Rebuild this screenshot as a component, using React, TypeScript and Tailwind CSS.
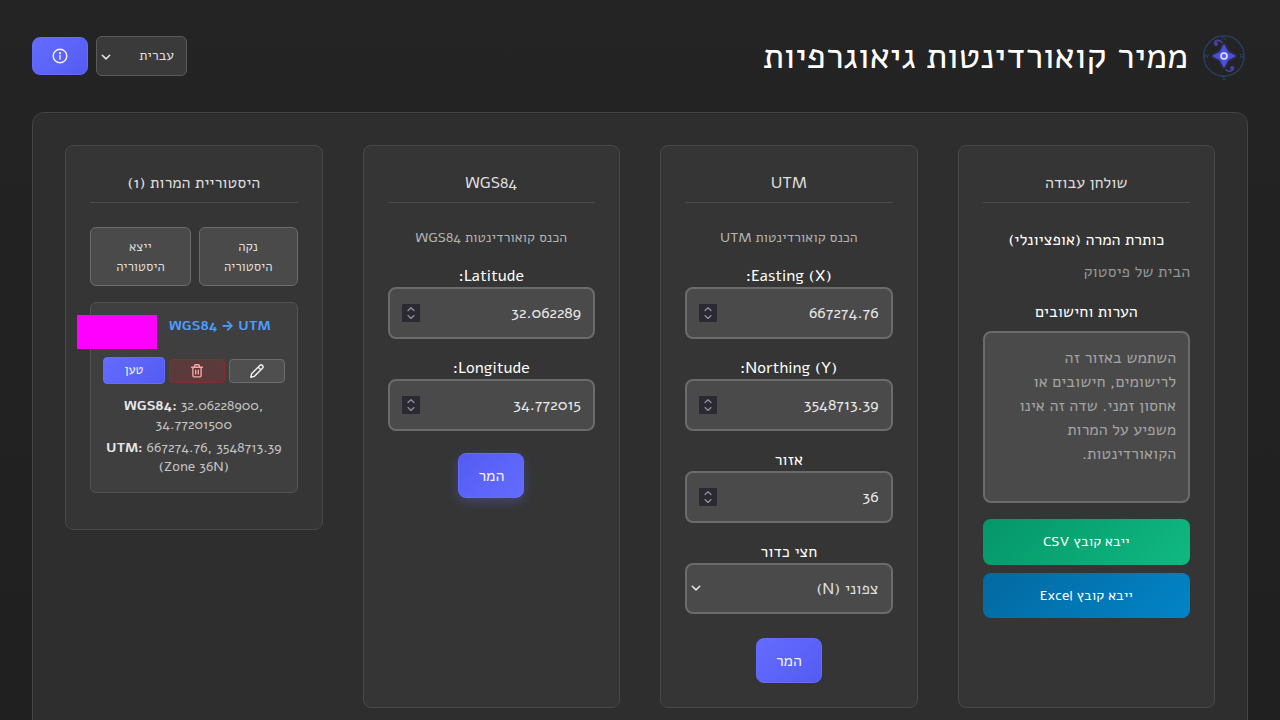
import type { ReactNode } from "react";

function CompassLogo() {
  return (
    <svg viewBox="0 0 48 48" className="size-12 shrink-0" aria-hidden="true">
      <defs>
        <filter id="glow" x="-50%" y="-50%" width="200%" height="200%">
          <feGaussianBlur stdDeviation="1.5" />
        </filter>
      </defs>
      <circle cx="24" cy="24" r="20.2" fill="none" stroke="#263f5f" strokeWidth="1.4" />
      <g fill="#2b4a72" fontSize="6" fontFamily="Liberation Sans, sans-serif" textAnchor="middle">
        <text x="24" y="8">N</text>
        <text x="24" y="48">S</text>
        <text x="42" y="26">E</text>
        <text x="6" y="26">W</text>
      </g>
      <path d="M24 12 L28 20 L36 24 L28 28 L24 36 L20 28 L12 24 L20 20 Z" fill="#4648d8" filter="url(#glow)" />
      <path d="M24 12 L28 20 L36 24 L28 28 L24 36 L20 28 L12 24 L20 20 Z" fill="#4b50dc" />
      <g fill="none" stroke="#4640a8" strokeWidth="1.6" strokeLinecap="round">
        <path d="M22 10.5 C20 7.5 15 7.5 14.5 11.5" />
        <path d="M26 38 C29 40.5 33.5 39 33.5 35.5" />
      </g>
      <circle cx="16" cy="12" r="2" fill="#4640a8" />
      <circle cx="32" cy="36" r="2" fill="#4640a8" />
      <circle cx="24" cy="24" r="3" fill="#5b5fe8" stroke="#dfe2ff" strokeWidth="1.6" />
    </svg>
  );
}

function Chevron({ className }: { className: string }) {
  return (
    <svg viewBox="0 0 10 10" className={className} fill="none" stroke="#e6e6e6" strokeWidth="1.5" strokeLinecap="round" strokeLinejoin="round" aria-hidden="true">
      <path d="M1.3 3.2 L5 6.9 L8.7 3.2" />
    </svg>
  );
}

function Card({ title, children, className = "" }: { title: string; children: ReactNode; className?: string }) {
  return (
    <section className={`flex flex-col rounded-lg border border-[#484848] bg-[#353535] p-6 ${className}`}>
      <h2 className="mb-6 border-b border-[#4a4a4a] pb-1.5 text-center text-base leading-[26px] text-[#dedede]">{title}</h2>
      {children}
    </section>
  );
}

function NumberField({ id, label, value }: { id: string; label: string; value: string }) {
  return (
    <div className="mb-4 flex flex-col">
      <label htmlFor={id} className="h-6 text-center leading-[26px]">{label}</label>
      <div className="flex h-[52px] items-center rounded-lg border-2 border-[#6b6b6b] bg-[#4a4a4a] px-3">
        <input id={id} type="text" inputMode="decimal" dir="ltr" defaultValue={value} className="w-full min-w-0 flex-1 bg-transparent text-right text-[#e8e8e8] outline-none" />
        <svg viewBox="0 0 18 18" className="size-[18px] shrink-0 bg-[#2b2a33]" fill="none" stroke="#8f8f9d" strokeWidth="1.3" strokeLinecap="round" strokeLinejoin="round" aria-hidden="true">
          <path d="M6 6.6 L9 3.8 L12 6.6 M6 11.6 L9 14.4 L12 11.6" />
        </svg>
      </div>
    </div>
  );
}

const primary = "rounded-lg border border-[#646cff] bg-linear-135 from-[#646cff] to-[#535bf2] text-[#f2f2ff]";
const secondary = "h-[59px] flex-auto rounded-md border border-[#6b6b6b] bg-[#4a4a4a] text-[13px] leading-5 text-[#dedede]";

export default function App() {
  return (
    <div dir="rtl" className="min-h-screen bg-linear-to-b from-[#242424] to-[#1f1f1f] p-8 font-['Alef','Liberation_Sans',sans-serif] text-base text-white">
      <header className="mb-8 flex h-12 items-center justify-between">
        <div className="flex items-center gap-3">
          <CompassLogo />
          <h1 className="h-12 text-4xl leading-[50px]">ממיר קואורדינטות גיאוגרפיות</h1>
        </div>
        <div className="flex items-center gap-2">
          <div className="relative">
            <select aria-label="שפה" className="h-10 w-[91px] appearance-none rounded-md border border-[#5c5c5c] bg-[#3a3a3a] px-3 text-sm text-[#dedede]">
              <option>עברית</option>
              <option>English</option>
            </select>
            <Chevron className="pointer-events-none absolute top-4 left-[5px] size-[10px]" />
          </div>
          <button type="button" aria-label="מידע" className={`flex h-[38px] w-14 items-center justify-center ${primary}`}>
            <svg viewBox="0 0 16 16" className="size-4" fill="none" stroke="currentColor" strokeWidth="1.4" strokeLinecap="round" aria-hidden="true">
              <circle cx="8" cy="8" r="6.8" />
              <path d="M8 7.4 V11" />
              <circle cx="8" cy="5.2" r="0.4" fill="currentColor" />
            </svg>
          </button>
        </div>
      </header>

      <main className="grid grid-cols-4 gap-10 rounded-xl border border-[#444444] bg-[#2e2e2e] p-8">
        <Card title="שולחן עבודה">
          <label htmlFor="title" className="mb-1.5 text-center leading-[26px]">כותרת המרה (אופציונלי)</label>
          <input id="title" type="text" placeholder="הבית של פיסטוק" className="mb-3.5 h-[26px] w-full bg-transparent leading-[26px] outline-none placeholder:text-[#949494]" />
          <label htmlFor="notes" className="mb-1.5 text-center leading-[26px]">הערות וחישובים</label>
          <textarea
            id="notes"
            placeholder="השתמש באזור זה לרישומים, חישובים או אחסון זמני. שדה זה אינו משפיע על המרות הקואורדינטות."
            className="mb-4 h-[172px] w-full resize-none rounded-lg border-2 border-[#6b6b6b] bg-[#4a4a4a] px-3 py-[13px] leading-6 outline-none placeholder:text-[#a3a3a3]"
          />
          <button type="button" className="mb-2 h-[46px] rounded-lg bg-linear-135 from-[#059669] to-[#10b981] text-sm">ייבא קובץ CSV</button>
          <button type="button" className="h-[45px] rounded-lg bg-linear-135 from-[#0369a1] to-[#0284c7] text-sm">ייבא קובץ Excel</button>
        </Card>

        <Card title="UTM">
          <p className="mb-3.5 text-center text-sm leading-[22px] text-[#b3b3b3]">הכנס קואורדינטות UTM</p>
          <NumberField id="easting" label="Easting (X):" value="667274.76" />
          <NumberField id="northing" label="Northing (Y):" value="3548713.39" />
          <NumberField id="zone" label="אזור" value="36" />
          <div className="mb-6 flex flex-col">
            <label htmlFor="hemisphere" className="h-6 text-center leading-[26px]">חצי כדור</label>
            <div className="relative">
              <select id="hemisphere" className="block h-[51px] w-full appearance-none rounded-lg border-2 border-[#6b6b6b] bg-[#4a4a4a] px-3 text-[#dedede]">
                <option>צפוני (N)</option>
                <option>דרומי (S)</option>
              </select>
              <Chevron className="pointer-events-none absolute top-5 left-[6px] size-[10px]" />
            </div>
          </div>
          <button type="button" className={`h-[45px] w-[66px] self-center ${primary}`}>המר</button>
        </Card>

        <Card title="WGS84">
          <p className="mb-3.5 text-center text-sm leading-[22px] text-[#b3b3b3]">הכנס קואורדינטות WGS84</p>
          <NumberField id="latitude" label="Latitude:" value="32.062289" />
          <NumberField id="longitude" label="Longitude:" value="34.772015" />
          <button type="button" className="mt-1.5 h-[45px] w-[66px] self-center rounded-lg border border-[#646cff] bg-linear-135 from-[#535bf2] to-[#646cff] text-[#f2f2ff] shadow-[0_4px_12px_rgba(100,108,255,0.3)]">המר</button>
        </Card>

        <Card title="היסטוריית המרות (1)" className="self-start">
          <div className="mb-4 flex gap-2">
            <button type="button" className={`${secondary} w-[99px]`}>נקה<br />היסטוריה</button>
            <button type="button" className={`${secondary} w-[101px]`}>ייצא<br />היסטוריה</button>
          </div>
          <article className="mb-3 rounded-md border border-[#525252] bg-[#3f3f3f] p-3">
            <div className="relative mb-2 flex h-[34px] items-start ps-3.5">
              <h3 dir="ltr" className="text-sm leading-5 font-bold whitespace-nowrap text-[#4a9eff]">
                WGS84 <span className="font-['Inter',sans-serif]">→</span> UTM
              </h3>
              <div className="absolute top-0 -left-[26px] h-[34px] w-20 bg-[#ff00ff]" />
            </div>
            <div className="mb-3 flex items-center gap-1">
              <button type="button" aria-label="ערוך" className="flex h-6 flex-1 items-center justify-center rounded border border-[#6b6b6b] bg-[#4f4f4f] text-[#f0f0f0]">
                <svg viewBox="0 0 16 16" className="size-4" fill="none" stroke="currentColor" strokeWidth="1.4" strokeLinejoin="round" aria-hidden="true">
                  <path d="M1.8 14.2 L2.6 10.8 L10.8 2.5 A1.9 1.9 0 0 1 13.5 5.2 L5.2 13.4 Z M9.2 4.2 L11.8 6.8" />
                </svg>
              </button>
              <button type="button" aria-label="מחק" className="flex h-6 flex-1 items-center justify-center rounded border border-[#8b2c2c] bg-[#5a3a3a] text-[#fca5a5]">
                <svg viewBox="0 0 16 16" className="size-4" fill="none" stroke="currentColor" strokeWidth="1.4" strokeLinecap="round" strokeLinejoin="round" aria-hidden="true">
                  <path d="M2.6 4.2 H13.4 M5.6 4.2 V2.9 C5.6 2.2 6 1.8 6.7 1.8 H9.3 C10 1.8 10.4 2.2 10.4 2.9 V4.2 M3.9 4.2 V12.6 C3.9 13.4 4.4 13.9 5.2 13.9 H10.8 C11.6 13.9 12.1 13.4 12.1 12.6 V4.2 M6.7 7.2 V11 M9.3 7.2 V11" />
                </svg>
              </button>
              <button type="button" className="h-[27px] w-[62px] rounded border border-[#646cff] bg-linear-135 from-[#646cff] to-[#535bf2] text-[13px] text-[#f2f2ff]">טען</button>
            </div>
            <div dir="ltr" className="mb-1 flex flex-col gap-1 text-center text-sm leading-[19px] text-[#c4c4c4]">
              <p><strong className="text-[#e8e8e8]">WGS84:</strong> 32.06228900, 34.77201500</p>
              <p><strong className="text-[#e8e8e8]">UTM:</strong> 667274.76, 3548713.39 (Zone 36N)</p>
            </div>
          </article>
        </Card>
      </main>
    </div>
  );
}
